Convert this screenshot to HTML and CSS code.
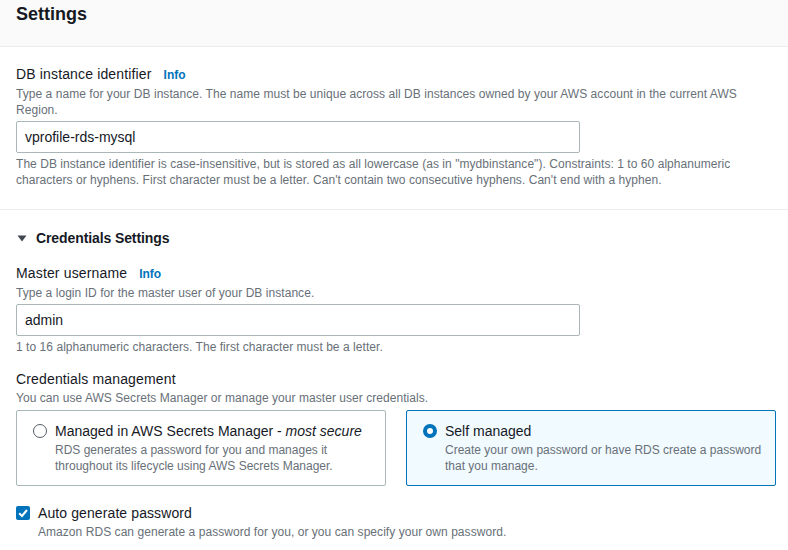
FILE: index.html
```html
<!DOCTYPE html>
<html lang="en">
<head>
<meta charset="utf-8">
<title>Settings</title>
<link rel="stylesheet" href="styles.css">
</head>
<body>
<div class="panel">
  <div class="panel-header">
    <h2 class="panel-title">Settings</h2>
  </div>
  <div class="section">
    <div class="field">
      <div class="label-row"><span class="label">DB instance identifier</span><a class="info">Info</a></div>
      <div class="desc">Type a name for your DB instance. The name must be unique across all DB instances owned by your AWS account in the current AWS Region.</div>
      <div class="input">vprofile-rds-mysql</div>
      <div class="hint">The DB instance identifier is case-insensitive, but is stored as all lowercase (as in "mydbinstance"). Constraints: 1 to 60 alphanumeric characters or hyphens. First character must be a letter. Can't contain two consecutive hyphens. Can't end with a hyphen.</div>
    </div>
  </div>
  <div class="section section-cred">
    <div class="expander">
      <svg class="caret" width="10" height="7" viewBox="0 0 10 7"><polygon points="0.5,0.5 9.5,0.5 5,6.5" fill="#414750"/></svg>
      <span class="expander-title">Credentials Settings</span>
    </div>
    <div class="field">
      <div class="label-row"><span class="label">Master username</span><a class="info">Info</a></div>
      <div class="desc">Type a login ID for the master user of your DB instance.</div>
      <div class="input">admin</div>
      <div class="hint">1 to 16 alphanumeric characters. The first character must be a letter.</div>
    </div>
    <div class="field field-mgmt">
      <div class="label">Credentials management</div>
      <div class="desc">You can use AWS Secrets Manager or manage your master user credentials.</div>
      <div class="tiles">
        <div class="tile">
          <span class="radio"></span>
          <div class="tile-body">
            <div class="tile-title">Managed in AWS Secrets Manager - <em>most secure</em></div>
            <div class="tile-desc">RDS generates a password for you and manages it throughout its lifecycle using AWS Secrets Manager.</div>
          </div>
        </div>
        <div class="tile tile-selected">
          <span class="radio radio-checked"></span>
          <div class="tile-body">
            <div class="tile-title">Self managed</div>
            <div class="tile-desc">Create your own password or have RDS create a password that you manage.</div>
          </div>
        </div>
      </div>
    </div>
    <div class="check-row">
      <span class="checkbox"><svg width="14" height="14" viewBox="0 0 14 14"><polyline points="3.2,7.2 6,10 11,4" fill="none" stroke="#fff" stroke-width="2"/></svg></span>
      <div class="check-body">
        <div class="check-label">Auto generate password</div>
        <div class="desc">Amazon RDS can generate a password for you, or you can specify your own password.</div>
      </div>
    </div>
  </div>
</div>
</body>
</html>
```
FILE: styles.css
```css
* { box-sizing: border-box; }
html, body { margin: 0; padding: 0; background: #ffffff; }
body {
  font-family: "Liberation Sans", Arial, sans-serif;
  color: #16191f;
  font-size: 14px;
  line-height: 22px;
}
.panel { width: 788px; }
.panel-header {
  background: #fafafa;
  border-bottom: 1px solid #eaeded;
  height: 47px;
  padding: 3px 16px 0;
}
.panel-title {
  margin: 0;
  font-size: 18px;
  line-height: 22px;
  font-weight: 700;
}
.section { padding: 16px 12px 21px 16px; }
.section-cred {
  border-top: 1px solid #eaeded;
  padding-top: 17px;
}
.label-row { display: flex; align-items: baseline; gap: 12px; }
.label { font-size: 14px; line-height: 22px; letter-spacing: 0.15px; }
.info { color: #0073bb; font-weight: 700; font-size: 12px; }
.desc { font-size: 12px; line-height: 16px; color: #687078; letter-spacing: 0.05px; }
.input {
  margin-top: 3px;
  width: 564px;
  height: 32px;
  border: 1px solid #aab7b8;
  border-radius: 2px;
  padding: 4px 8px;
  font-size: 14px;
  line-height: 22px;
}
.hint { margin-top: 3px; font-size: 12px; line-height: 16px; color: #687078; letter-spacing: 0.05px; }
.expander { display: flex; align-items: center; gap: 9px; padding-left: 1px; }
.caret { display: block; }
.expander-title { font-weight: 700; font-size: 14px; line-height: 22px; color: #16191f; letter-spacing: -0.1px; }
.section-cred .field { margin-top: 13px; }
.section-cred .field-mgmt { margin-top: 13px; }
.tiles {
  margin-top: 4px;
  display: grid;
  grid-template-columns: 370px 370px;
  gap: 20px;
}
.tile {
  display: flex;
  gap: 8px;
  border: 1px solid #aab7b8;
  border-radius: 2px;
  padding: 9px 12px 11px 16px;
  min-height: 76px;
}
.tile-selected { background: #f1faff; border-color: #0073bb; }
.radio {
  flex: none;
  width: 14px;
  height: 14px;
  margin-top: 4px;
  border: 1px solid #545b64;
  border-radius: 50%;
  background: #fff;
}
.radio-checked { border: 4px solid #0073bb; }
.tile-title { font-size: 14px; line-height: 22px; }
.tile-desc { font-size: 12px; line-height: 16px; color: #687078; }
.check-row { display: flex; gap: 8px; margin-top: 16px; }
.checkbox {
  flex: none;
  width: 14px;
  height: 14px;
  margin-top: 4px;
  background: #0073bb;
  border-radius: 2px;
  display: flex;
}
.check-label { font-size: 14px; line-height: 22px; letter-spacing: 0.1px; }
```
